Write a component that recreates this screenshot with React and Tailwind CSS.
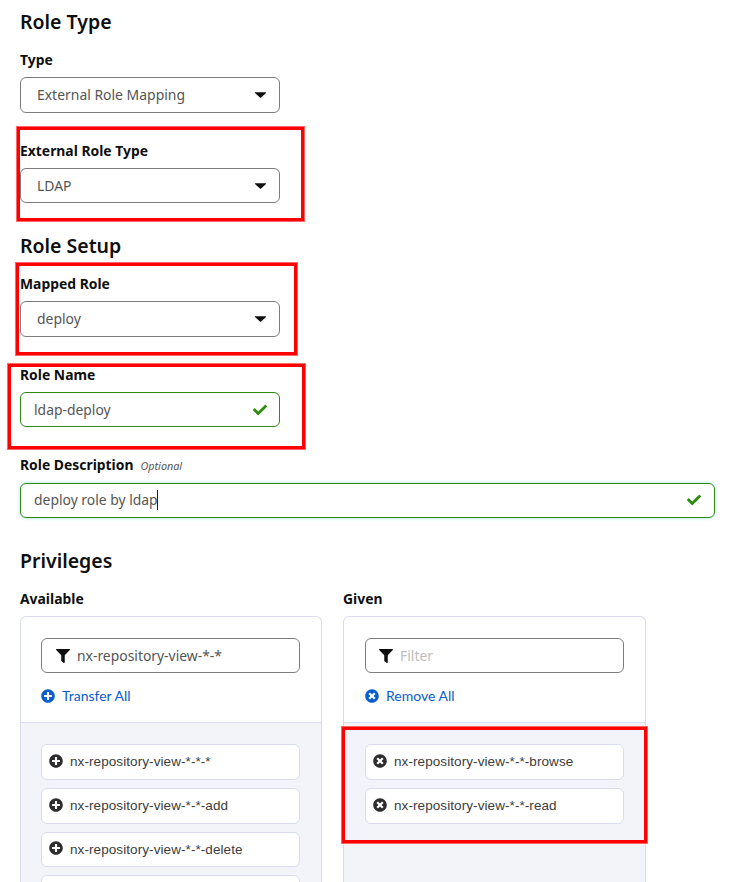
import { FaCheck, FaFilter, FaPlusCircle, FaTimesCircle } from "react-icons/fa";

function Heading({ children, className }) {
  return <h2 className={`h-7 text-[19.5px] leading-7 font-semibold text-[#0f0f10] ${className}`}>{children}</h2>;
}

function Label({ children, optional }) {
  return (
    <div className="flex h-5 items-baseline gap-[7px] leading-5">
      <span className="text-[13.9px] font-bold text-[#0f0f10]">{children}</span>
      {optional && <span className="text-[10.8px] text-[#555] italic">Optional</span>}
    </div>
  );
}

function Select({ label, value, className, box }) {
  return (
    <div className={className}>
      <Label>{label}</Label>
      <div className={`mt-[7px] flex w-[260px] items-center justify-between rounded-[6px] border border-[#7d7d7d] pr-3 pl-4 ${box}`}>
        <span className="text-[13.95px] leading-5 text-[#555]">{value}</span>
        <svg className="h-[6px] w-[13px] fill-[#0f0f10]" viewBox="0 0 13 6">
          <path d="M1.2 0.3h10.6q.7 0 .2.6L7.1 5.5q-.6.5-1.2 0L1 .9Q.5.3 1.2.3z" />
        </svg>
      </div>
    </div>
  );
}

function TextField({ label, value, optional, className, box, caret }) {
  return (
    <div className={className}>
      <Label optional={optional}>{label}</Label>
      <div className={`flex h-[35px] items-center justify-between rounded-[6px] border border-[#2e8b0f] pl-[13px] ${box}`}>
        <span className="flex items-center text-[13.9px] leading-5 text-[#555]">
          {value}
          {caret && <span className="-ml-px h-5 w-px bg-[#222]" />}
        </span>
        <FaCheck className="size-[14px] text-[#2e8b0f]" />
      </div>
    </div>
  );
}

function Panel({ title, width, pad, filter, placeholder, action, Icon, items }) {
  return (
    <div className={width}>
      <Label>{title}</Label>
      <div className="mt-[7px] h-[266px] overflow-hidden rounded-t-[6px] border border-b-0 border-[#d9dbf0]">
        <div className={`h-[106px] border-b border-[#d9dbf0] pt-[21px] ${pad}`}>
          <div className={`flex h-[35px] w-[259px] items-center rounded-[6px] border border-[#7d7d7d] text-[13.9px] ${filter ? "gap-[7px] pl-[14px]" : "gap-[7px] pl-[13px]"}`}>
            <FaFilter className="size-[14px] text-[#0f0f10]" />
            {filter ? <span className="pt-px text-[#555]">{filter}</span> : <span className="pt-px text-[#bcbcbc]">{placeholder}</span>}
          </div>
          <div className="mt-[13px] flex h-5 items-center gap-[7px] font-['Lato',sans-serif] text-[14px] text-[#0a5dcc]">
            <Icon className="size-[14px]" />
            <span className="-mt-px">{action}</span>
          </div>
        </div>
        <div className={`flex h-full flex-col gap-2 bg-[#f3f4fa] pt-[21px] ${pad}`}>
          {items.map((item) => (
            <div key={item} className="flex h-[35.8px] w-[259px] shrink-0 items-center gap-[7px] rounded-[6px] border border-[#d9dbf0] bg-white pl-[7px] font-['Liberation_Sans',sans-serif] text-[13.5px] tracking-[0.08px] text-[#3c3c3c]">
              <Icon className="relative -top-px size-[14px] text-[#2d2d2d]" />
              <span className="pt-px">{item}</span>
            </div>
          ))}
        </div>
      </div>
    </div>
  );
}

function Highlight({ className }) {
  return <div className={`absolute border-[3px] border-[#ff0000] shadow-[0_0_0_1px_rgba(255,0,0,0.6)] ${className}`} />;
}

export default function App() {
  return (
    <main className="relative h-[882px] w-[738px] overflow-hidden bg-white pt-2 pl-5 font-['Noto_Sans',sans-serif]">
      <Heading>Role Type</Heading>
      <Select className="mt-[14px]" label="Type" value="External Role Mapping" box="h-[36px] pb-px" />
      <Select className="mt-[28px]" label="External Role Type" value="LDAP" box="h-[35px]" />

      <Heading className="mt-[29px]">Role Setup</Heading>
      <Select className="mt-[14px]" label="Mapped Role" value="deploy" box="h-[36px] pb-px" />
      <TextField className="mt-[28px]" label="Role Name" value="ldap-deploy" box="mt-[7px] w-[260px] pr-3" />
      <TextField
        className="mt-[28px]"
        label="Role Description"
        optional
        caret
        value="deploy role by ldap"
        box="mt-[8px] w-[695px] pr-[13px] pb-px shadow-[0_0_3px_1px_#c5ebfa]"
      />

      <Heading className="mt-[29px]">Privileges</Heading>
      <div className="mt-[14px] flex gap-[21px]">
        <Panel
          title="Available"
          width="w-[302px]"
          pad="pl-[20px]"
          filter="nx-repository-view-*-*"
          action="Transfer All"
          Icon={FaPlusCircle}
          items={["nx-repository-view-*-*-*", "nx-repository-view-*-*-add", "nx-repository-view-*-*-delete", ""]}
        />
        <Panel
          title="Given"
          width="w-[303px]"
          pad="pl-[21px]"
          placeholder="Filter"
          action="Remove All"
          Icon={FaTimesCircle}
          items={["nx-repository-view-*-*-browse", "nx-repository-view-*-*-read"]}
        />
      </div>

      <Highlight className="top-[127px] left-[17px] h-[94px] w-[287px]" />
      <Highlight className="top-[263px] left-[16px] h-[92px] w-[281px]" />
      <Highlight className="top-[364px] left-[8px] h-[85px] w-[297px]" />
      <Highlight className="top-[727px] left-[342px] h-[116px] w-[305px]" />
    </main>
  );
}
